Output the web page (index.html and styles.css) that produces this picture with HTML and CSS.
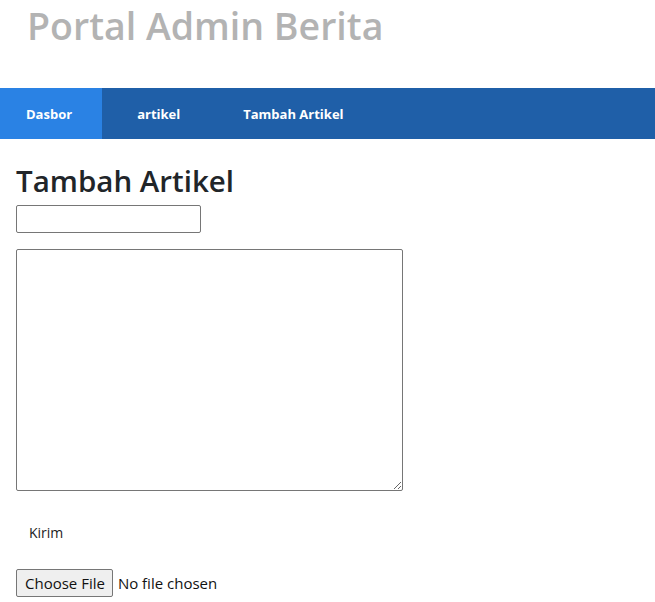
FILE: index.html
```html
<!DOCTYPE html>
<html>
<head>
<meta charset="utf-8">
<link rel="stylesheet" href="styles.css">
</head>
<body>
<header class="site-header">
  <h1 class="brand">Portal Admin Berita</h1>
</header>
<nav class="nav">
  <a class="nav-item active" href="#">Dasbor</a>
  <a class="nav-item" href="#">artikel</a>
  <a class="nav-item" href="#">Tambah Artikel</a>
</nav>
<main class="content">
  <h2 class="page-title">Tambah Artikel</h2>
  <form class="form">
    <input class="title-input" type="text">
    <textarea class="body-input"></textarea>
    <button class="submit" type="button">Kirim</button>
    <div class="file-row">
      <span class="file-btn">Choose File</span>
      <span class="file-label">No file chosen</span>
    </div>
  </form>
</main>
</body>
</html>
```
FILE: styles.css
```css
* { box-sizing: border-box; }
body {
  margin: 0;
  font-family: "Open Sans", "Noto Sans", sans-serif;
  background: #fff;
}
.site-header {
  height: 88px;
  padding: 0 27px;
}
.brand {
  margin: 0;
  padding-top: 1px;
  font-size: 37.5px;
  font-weight: 600;
  color: #b3b3b3;
  line-height: 50px;
}
.nav {
  display: flex;
  height: 51px;
  background: #1f5fa8;
}
.nav-item {
  display: flex;
  align-items: center;
  color: #fff;
  text-decoration: none;
  font-weight: 700;
  font-size: 13px;
  padding: 0 32px 0 35px;
}
.nav-item:last-child {
  padding-left: 31px;
}
.nav-item.active {
  background: #2a82e4;
  padding: 0 30px 0 26px;
}
.content {
  padding: 0 16px;
}
.page-title {
  margin: 20px 0 0;
  font-size: 29.5px;
  font-weight: 600;
  color: #212529;
  line-height: 44px;
}
.form {
  display: flex;
  flex-direction: column;
  align-items: flex-start;
}
.title-input {
  margin-top: 2px;
  width: 185px;
  height: 28px;
  border: 1px solid #767676;
  border-radius: 2px;
}
.body-input {
  margin-top: 16px;
  width: 387px;
  height: 242px;
  border: 1px solid #767676;
  border-radius: 2px;
  resize: both;
}
.submit {
  margin-top: 30px;
  border: none;
  background: transparent;
  font-family: inherit;
  font-size: 14px;
  color: #222;
  padding: 0 13px;
  height: 22px;
}
.file-row {
  margin-top: 26px;
  display: flex;
  align-items: center;
  font-size: 15px;
  color: #111;
}
.file-btn {
  display: inline-block;
  height: 28px;
  line-height: 26px;
  padding: 0 7px 0 8px;
  border: 1px solid #767676;
  border-radius: 2px;
  background: #efefef;
  margin-right: 5px;
}
```
